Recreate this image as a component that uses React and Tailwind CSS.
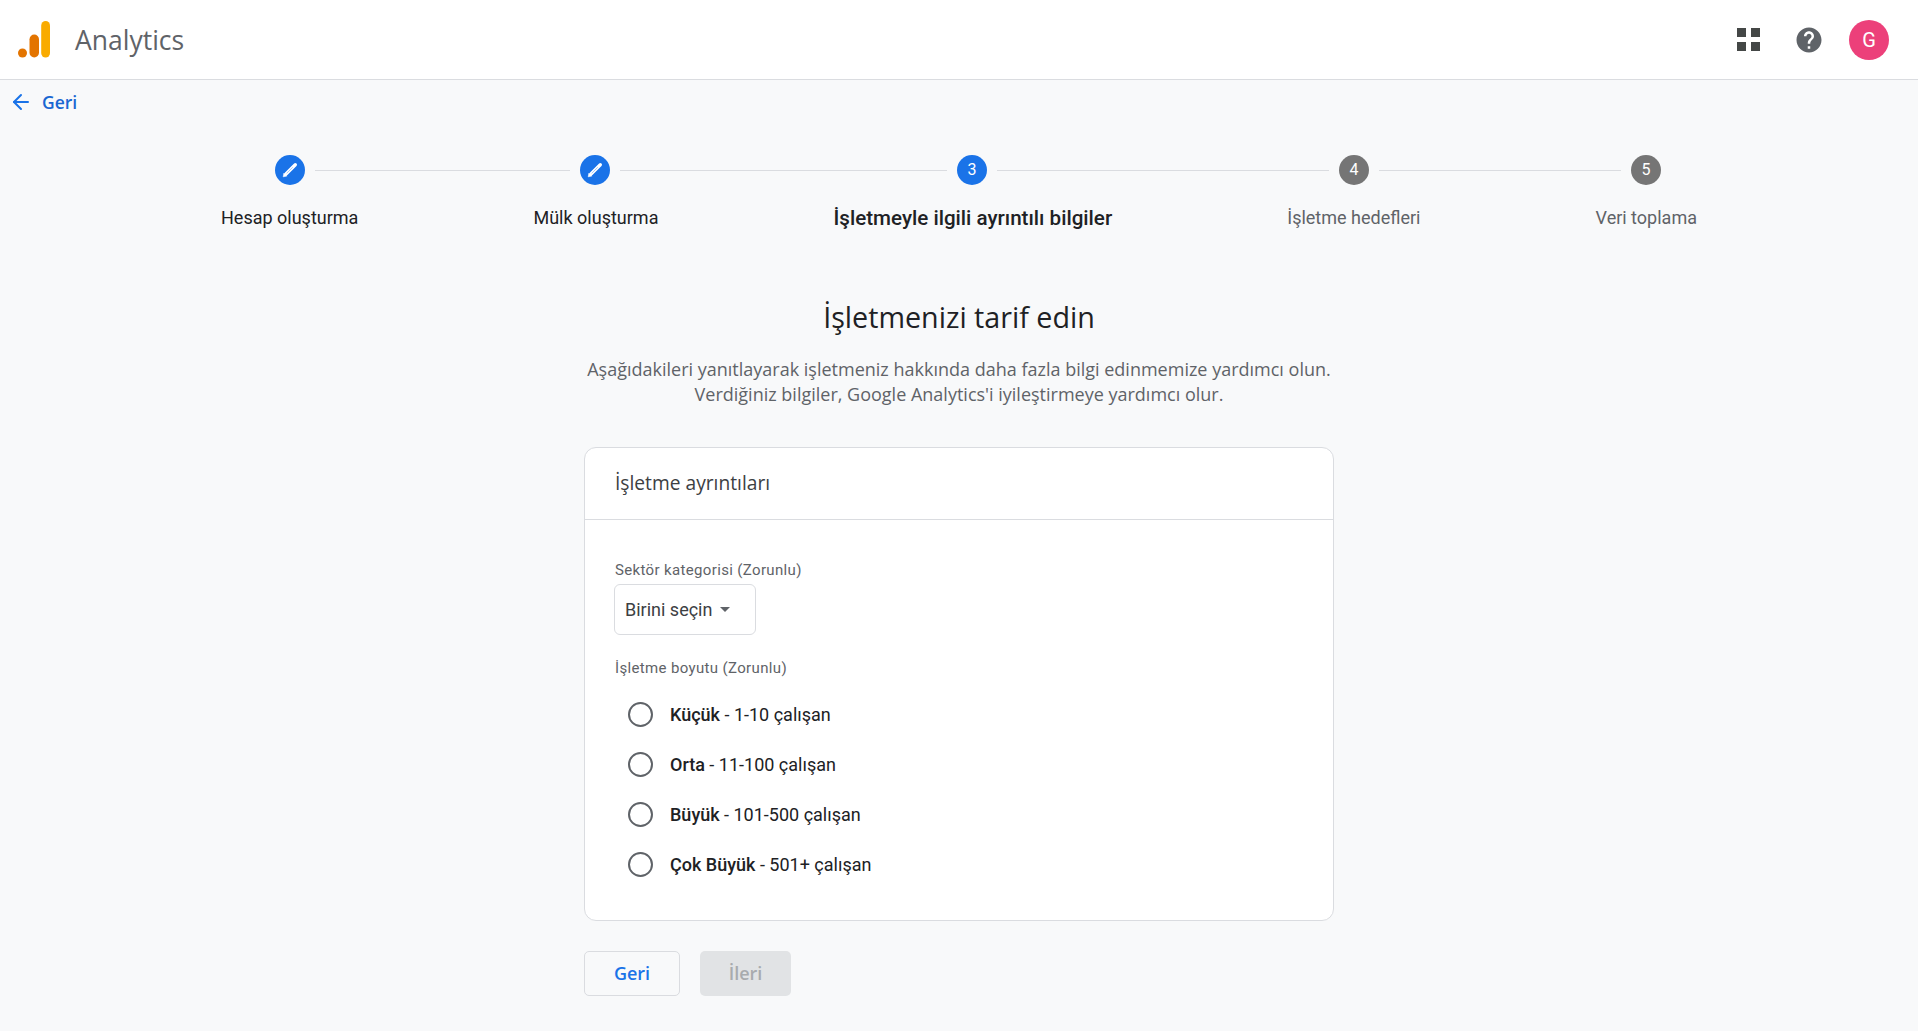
import React from "react";
import { ArrowLeft } from "lucide-react";

const HELP = "M12 2C6.48 2 2 6.48 2 12s4.48 10 10 10 10-4.48 10-10S17.52 2 12 2zm1 17h-2v-2h2v2zm2.07-7.75l-.9.92C13.45 12.9 13 13.5 13 15h-2v-.5c0-1.1.45-2.1 1.17-2.83l1.24-1.26c.37-.36.59-.86.59-1.41 0-1.1-.9-2-2-2s-2 .9-2 2H8c0-2.21 1.79-4 4-4s4 1.79 4 4c0 .88-.36 1.68-.93 2.25z";

function Circle({ color, children }) {
  return (
    <div className={`flex h-[30px] w-[30px] shrink-0 items-center justify-center rounded-full text-[16px] text-white ${color}`}>
      {children}
    </div>
  );
}

function Edit() {
  return (
    <Circle color="bg-[#1a73e8]">
      <svg width="18" height="18" viewBox="0 0 18 18" fill="none">
        <line x1="5" y1="13" x2="14.3" y2="3.7" stroke="#fff" strokeWidth="3.4" strokeLinecap="round" />
        <path d="M2.2 15.8L2.9 12.2L5.8 15.1Z" fill="#fff" stroke="#fff" strokeWidth="0.6" strokeLinejoin="round" />
        <line x1="5.6" y1="12.4" x2="11.8" y2="6.2" stroke="#1a73e8" strokeWidth="0.7" strokeOpacity="0.55" />
      </svg>
    </Circle>
  );
}

function Line({ className }) {
  return <div className={`mx-[10px] h-px shrink-0 bg-[#dadce0] ${className}`} />;
}

function Radio({ bold, rest }) {
  return (
    <div className="flex h-[50px] items-center pl-[13px]">
      <div className="mt-px h-[25px] w-[25px] rounded-full border-2 border-[#5f6368]" />
      <div className="ml-[17px] text-[18px] text-[#202124]">
        <span className="font-medium">{bold}</span> - {rest}
      </div>
    </div>
  );
}

export default function App() {
  return (
    <div className="min-h-[1031px] bg-[#f8f9fa] font-['Roboto',sans-serif]">
      <header className="flex h-[80px] items-center border-b border-[#dadce0] bg-white pl-[18px] pr-[29px]">
        <svg width="32" height="37" viewBox="0 0 32 37" className="shrink-0">
          <circle cx="4.5" cy="32" r="4.5" fill="#e37400" />
          <rect x="11.5" y="13.5" width="9.5" height="23" rx="4.75" fill="#e37400" />
          <rect x="23.2" y="0" width="8.8" height="36.5" rx="4.4" fill="#f9ab00" />
        </svg>
        <div className="ml-[25px] pt-[3px] font-['Open_Sans',sans-serif] text-[26.5px] text-[#5f6368]">Analytics</div>
        <div className="ml-auto flex items-center">
          <div className="grid grid-cols-[9px_9px] gap-[5px]">
            <span className="h-[9px] bg-[#444746]" /><span className="h-[9px] bg-[#444746]" />
            <span className="h-[9px] bg-[#444746]" /><span className="h-[9px] bg-[#444746]" />
          </div>
          <svg width="30" height="30" viewBox="0 0 24 24" fill="#5f6368" className="ml-[34px]"><path d={HELP} /></svg>
          <div className="ml-[25px] flex h-[40px] w-[40px] items-center justify-center rounded-full bg-[#ec407a] text-[20px] text-white">G</div>
        </div>
      </header>

      <div className="flex h-[44px] items-center pl-[9px] text-[#1a73e8]">
        <ArrowLeft size={24} strokeWidth={2} />
        <span className="ml-[9px] font-['Open_Sans',sans-serif] text-[17.5px] font-semibold text-[#1967d2]">Geri</span>
      </div>

      <div className="mx-auto mt-[31px] w-[1476px]">
        <div className="flex items-center pl-[54px]">
          <Edit />
          <Line className="w-[255px]" />
          <Edit />
          <Line className="w-[327px]" />
          <Circle color="bg-[#1a73e8]">3</Circle>
          <Line className="w-[332px]" />
          <Circle color="bg-[#757575]">4</Circle>
          <Line className="w-[242px]" />
          <Circle color="bg-[#757575]">5</Circle>
        </div>
        <div className="mt-[21px] flex justify-between text-[18px] leading-[24px]">
          <span className="text-[#202124]">Hesap oluşturma</span>
          <span className="text-[#202124]">Mülk oluşturma</span>
          <span className="text-[20.6px] font-medium text-[#202124]">İşletmeyle ilgili ayrıntılı bilgiler</span>
          <span className="text-[#5f6368]">İşletme hedefleri</span>
          <span className="text-[#5f6368]">Veri toplama</span>
        </div>
      </div>

      <div className="mx-auto mt-[67px] w-[750px]">
        <h1 className="text-center font-['Open_Sans',sans-serif] text-[28.7px] leading-[40px] text-[#202124]">İşletmenizi tarif edin</h1>
        <p className="-mx-[20px] mt-[20px] text-center font-['Open_Sans',sans-serif] text-[18px] font-medium leading-[25px] text-[#5f6368]">
          Aşağıdakileri yanıtlayarak işletmeniz hakkında daha fazla bilgi edinmemize yardımcı olun.
          <br />
          Verdiğiniz bilgiler, Google Analytics'i iyileştirmeye yardımcı olur.
        </p>

        <div className="mt-[40px] rounded-[12px] border border-[#dadce0] bg-white">
          <div className="flex h-[72px] items-center border-b border-[#dadce0] px-[30px] font-['Open_Sans',sans-serif] text-[19.2px] text-[#3c4043]">
            İşletme ayrıntıları
          </div>
          <div className="px-[30px] pb-[31px] pt-[40px]">
            <div className="text-[15px] leading-[20px] tracking-[0.35px] text-[#5f6368]">Sektör kategorisi (Zorunlu)</div>
            <div className="-ml-px mt-[4px] flex h-[51px] w-[142px] items-center rounded-[6px] border border-[#dadce0] pl-[10px] text-[18px] text-[#3c4043]">
              Birini seçin
              <span className="ml-[8px] h-0 w-0 border-x-[5px] border-t-[5px] border-x-transparent border-t-[#5f6368]" />
            </div>
            <div className="mt-[23px] text-[15px] leading-[20px] tracking-[0.35px] text-[#5f6368]">İşletme boyutu (Zorunlu)</div>
            <div className="mt-[11px]">
              <Radio bold="Küçük" rest="1-10 çalışan" />
              <Radio bold="Orta" rest="11-100 çalışan" />
              <Radio bold="Büyük" rest="101-500 çalışan" />
              <Radio bold="Çok Büyük" rest="501+ çalışan" />
            </div>
          </div>
        </div>

        <div className="mt-[30px] flex gap-[20px] font-['Open_Sans',sans-serif] text-[18px] font-semibold">
          <button className="h-[45px] w-[96px] rounded-[5px] border border-[#dadce0] text-[#1a73e8]">Geri</button>
          <button className="h-[45px] w-[91px] rounded-[5px] bg-[#e1e3e5] text-[#a8abae]">İleri</button>
        </div>
      </div>
    </div>
  );
}
